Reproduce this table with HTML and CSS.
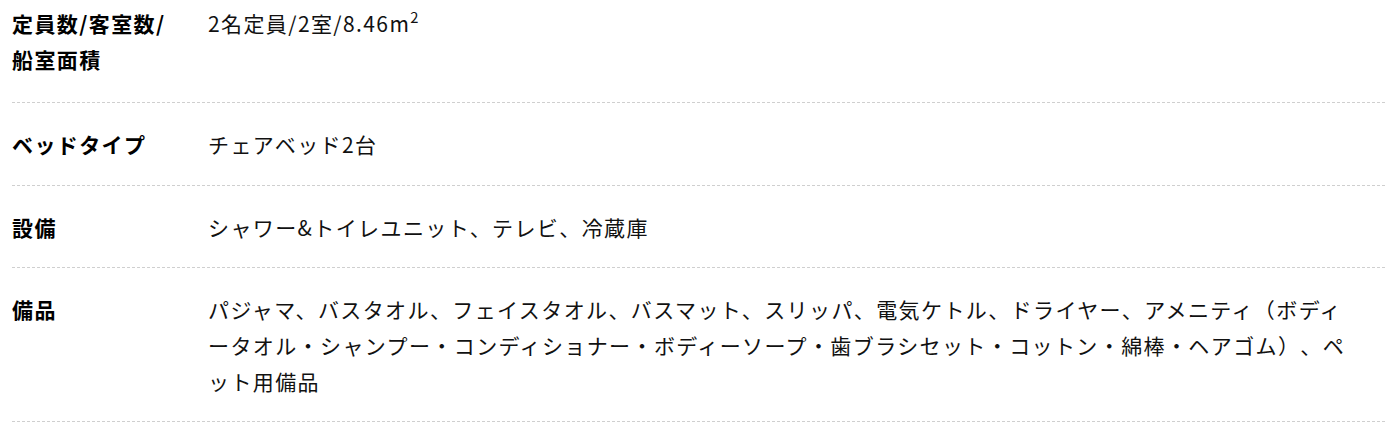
FILE: index.html
```html
<!DOCTYPE html>
<html lang="ja">
<head>
<meta charset="utf-8">
<title>客室情報</title>
<link rel="stylesheet" href="styles.css">
</head>
<body>
<dl class="spec">
  <div class="spec-row spec-row--first">
    <dt class="spec-label">定員数/客室数/船室面積</dt>
    <dd class="spec-value">2名定員/2室/8.46m<sup class="sup">2</sup></dd>
  </div>
  <div class="spec-row spec-row--tall">
    <dt class="spec-label">ベッドタイプ</dt>
    <dd class="spec-value">チェアベッド2台</dd>
  </div>
  <div class="spec-row">
    <dt class="spec-label">設備</dt>
    <dd class="spec-value">シャワー&amp;トイレユニット、テレビ、冷蔵庫</dd>
  </div>
  <div class="spec-row">
    <dt class="spec-label">備品</dt>
    <dd class="spec-value">パジャマ、バスタオル、フェイスタオル、バスマット、スリッパ、電気ケトル、ドライヤー、アメニティ（ボディータオル・シャンプー・コンディショナー・ボディーソープ・歯ブラシセット・コットン・綿棒・ヘアゴム）、ペット用備品</dd>
  </div>
</dl>
</body>
</html>
```
FILE: styles.css
```css
html, body {
  margin: 0;
  padding: 0;
  background: #fff;
}
body {
  font-family: "Noto Sans CJK JP", "Noto Sans", sans-serif;
  font-size: 21px;
  color: #111;
}
.spec {
  margin: 0;
  padding: 0 13px 0 12px;
}
.spec-row {
  display: grid;
  grid-template-columns: 168px 1fr;
  column-gap: 28px;
  padding: 23px 0;
  background-image: repeating-linear-gradient(to right, #cfcfcf 0 3px, transparent 3px 5px);
  background-size: 100% 1px;
  background-position: left bottom;
  background-repeat: no-repeat;
}
.spec-row--first {
  padding-top: 5px;
  padding-bottom: 26px;
}
.spec-row--tall {
  padding-bottom: 24px;
}
.spec-label,
.spec-value {
  margin: 0;
  line-height: 36px;
  letter-spacing: 1.4px;
  line-break: anywhere;
  text-spacing-trim: space-all;
}
.spec-label {
  font-weight: 700;
  color: #000;
}
.spec-value {
  padding-right: 26px;
  font-weight: 400;
}
.sup {
  font-size: 0.7em;
  line-height: 0;
  vertical-align: 0.6em;
  letter-spacing: 0;
}
```
